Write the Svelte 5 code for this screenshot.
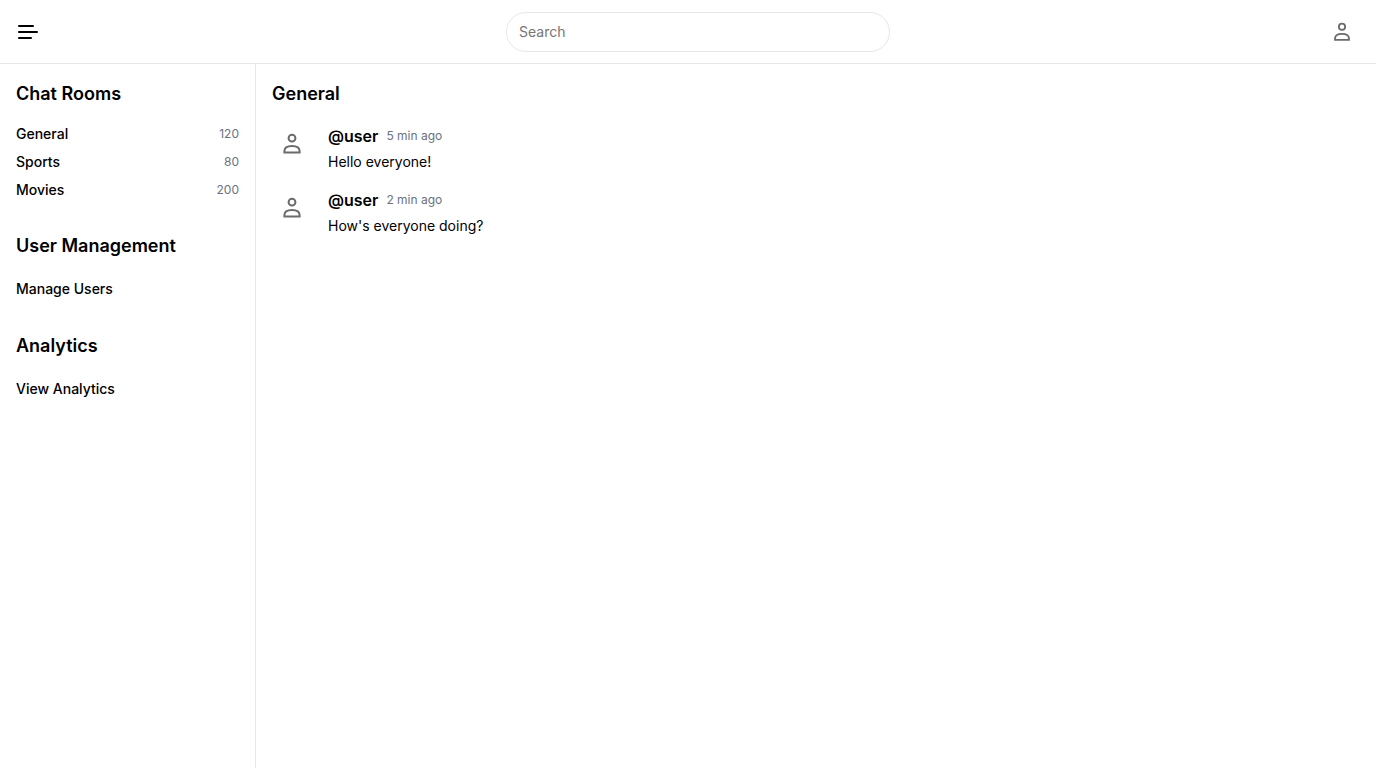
<script>
  const rooms = [
    { name: 'General', count: 120 },
    { name: 'Sports', count: 80 },
    { name: 'Movies', count: 200 },
  ];
  const messages = [
    { user: '@user', time: '5 min ago', text: 'Hello everyone!' },
    { user: '@user', time: '2 min ago', text: "How's everyone doing?" },
  ];
</script>

{#snippet person()}
  <svg class="person" viewBox="0 0 24 24" aria-hidden="true">
    <circle cx="12" cy="6.2" r="3.4" />
    <path d="M4.4 20.5v-1.3c0-3.1 3-5.1 7.6-5.1s7.6 2 7.6 5.1v1.3z" />
  </svg>
{/snippet}

<div class="page">
  <header>
    <div class="start">
      <button class="menu" aria-label="Menu">
        <svg viewBox="0 0 24 24" aria-hidden="true">
          <path d="M3 6H17M3 12H21M3 18H15" />
        </svg>
      </button>
    </div>
    <input type="search" placeholder="Search" aria-label="Search" />
    <button class="account" aria-label="Account">{@render person()}</button>
  </header>
  <div class="body">
    <aside>
      <section>
        <h2>Chat Rooms</h2>
        <ul>
          {#each rooms as room}
            <li><a href="#{room.name}">{room.name}</a><span>{room.count}</span></li>
          {/each}
        </ul>
      </section>
      <section>
        <h2>User Management</h2>
        <button class="action">Manage Users</button>
      </section>
      <section>
        <h2>Analytics</h2>
        <button class="action">View Analytics</button>
      </section>
    </aside>
    <main>
      <h2>General</h2>
      <div class="messages">
        {#each messages as message}
          <article>
            <div class="avatar">{@render person()}</div>
            <div>
              <div class="meta"><h3>{message.user}</h3><time>{message.time}</time></div>
              <p>{message.text}</p>
            </div>
          </article>
        {/each}
      </div>
    </main>
  </div>
</div>

<style>
  :global(body) {
    background: #fff;
    color: #000;
    font-family: Inter, sans-serif;
    font-size: 16px;
    line-height: 24px;
  }
  .page {
    min-height: 100vh;
    display: flex;
    flex-direction: column;
  }
  h2, h3, p, ul { margin: 0; padding: 0; }
  ul { list-style: none; }
  button {
    padding: 0;
    border: 0;
    background: none;
    color: inherit;
    font: inherit;
    cursor: pointer;
  }
  svg { display: block; }
  header {
    box-sizing: border-box;
    height: 64px;
    display: flex;
    align-items: center;
    justify-content: space-between;
    padding: 0 16px;
    border-bottom: 1px solid #e5e7eb;
  }
  .start { display: flex; padding-right: 32px; }
  .menu svg {
    width: 24px;
    height: 24px;
    fill: none;
    stroke: #000;
    stroke-width: 2;
    stroke-linecap: round;
  }
  input {
    box-sizing: border-box;
    width: 384px;
    height: 40px;
    padding: 8px 12px;
    border: 1px solid #e5e7eb;
    border-radius: 20px;
    background: #fff;
    font: inherit;
    font-size: 14px;
    line-height: 20px;
    color: inherit;
    appearance: none;
  }
  input::placeholder { color: #757575; opacity: 1; }
  .person {
    width: 24px;
    height: 24px;
    fill: none;
    stroke: #6b6b6b;
    stroke-width: 2;
  }
  .account {
    width: 36px;
    height: 36px;
    display: grid;
    place-items: center;
  }
  .account .person { width: 22px; height: 22px; }
  .body {
    flex: 1;
    display: flex;
  }
  aside {
    box-sizing: border-box;
    width: 256px;
    flex: none;
    display: flex;
    flex-direction: column;
    gap: 32px;
    padding: 16px;
    border-right: 1px solid #e5e7eb;
  }
  h2 {
    font-size: 18px;
    line-height: 28px;
    font-weight: 600;
  }
  aside h2 { margin-bottom: 16px; }
  ul {
    display: flex;
    flex-direction: column;
    gap: 8px;
  }
  li {
    display: flex;
    justify-content: space-between;
    align-items: center;
  }
  li a, .action, p {
    font-size: 14px;
    line-height: 20px;
  }
  li a, .action { font-weight: 500; }
  li a { color: inherit; text-decoration: none; }
  li span, time {
    font-size: 12px;
    line-height: 16px;
    color: #6b7280;
  }
  main { flex: 1; min-width: 0; padding: 16px; }
  .messages {
    display: flex;
    flex-direction: column;
    gap: 16px;
    margin-top: 16px;
  }
  article { display: flex; gap: 16px; }
  .avatar {
    width: 40px;
    height: 40px;
    display: grid;
    place-items: center;
  }
  .meta { display: flex; align-items: center; gap: 8px; margin-bottom: 4px; }
  h3 { font-size: 16px; line-height: 24px; font-weight: 600; }
</style>
